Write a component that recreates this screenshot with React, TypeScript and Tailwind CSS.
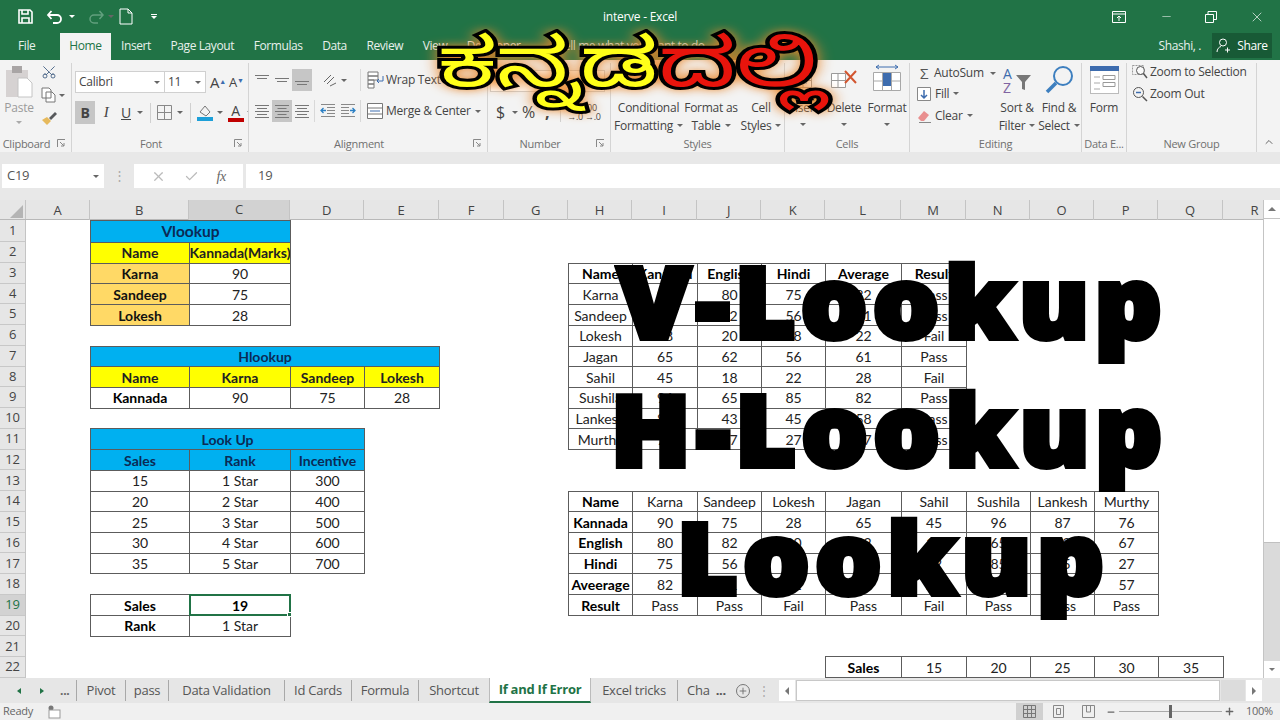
import React from 'react';
import { Scissors, ChevronUp, Plus, Minus, X, Check } from 'lucide-react';

type Cell = { c: number; t?: string; span?: number; kind?: string };

const cellStyles: Record<string, string> = {
  plain: 'bg-white text-[#222]',
  bold: 'bg-white font-bold text-black',
  blue: 'bg-[#00b0f0] font-bold text-[#0b2a55]',
  title: 'bg-[#00b0f0] text-[15.5px] font-bold text-[#0b2a55]',
  yellow: 'bg-[#ffff00] font-bold text-[#222]',
  orange: 'bg-[#ffd966] font-bold text-[#111]',
};

const letters = ['A', 'B', 'C', 'D', 'E', 'F', 'G', 'H', 'I', 'J', 'K', 'L', 'M', 'N', 'O', 'P', 'Q', 'R'];
const colTemplate = 'grid-cols-[64px_99px_101px_74px_75px_65px_64px_64px_65px_64px_64px_76px_65px_64px_64px_64px_65px_64px]';

const line = (c: number, values: string[], firstKind = 'plain', restKind = 'plain'): Cell[] =>
  values.map((t, i) => ({ c: c + i, t, kind: i === 0 ? firstKind : restKind }));

const vRows: string[][] = [
  ['Karna', '90', '80', '75', '82', 'Pass'],
  ['Sandeep', '75', '82', '56', '71', 'Pass'],
  ['Lokesh', '28', '20', '18', '22', 'Fail'],
  ['Jagan', '65', '62', '56', '61', 'Pass'],
  ['Sahil', '45', '18', '22', '28', 'Fail'],
  ['Sushila', '96', '65', '85', '82', 'Pass'],
  ['Lankesh', '87', '43', '45', '58', 'Pass'],
  ['Murthy', '76', '67', '27', '57', 'Pass'],
];

const sheetRows: Cell[][] = [
  [{ c: 1, t: 'Vlookup', span: 2, kind: 'title' }],
  line(1, ['Name', 'Kannada(Marks)'], 'yellow', 'yellow'),
  [...line(1, ['Karna', '90'], 'orange'), ...line(7, ['Name', 'Kannada', 'English', 'Hindi', 'Average', 'Result'], 'bold', 'bold')],
  [...line(1, ['Sandeep', '75'], 'orange'), ...line(7, vRows[0])],
  [...line(1, ['Lokesh', '28'], 'orange'), ...line(7, vRows[1])],
  line(7, vRows[2]),
  [{ c: 1, t: 'Hlookup', span: 4, kind: 'blue' }, ...line(7, vRows[3])],
  [...line(1, ['Name', 'Karna', 'Sandeep', 'Lokesh'], 'yellow', 'yellow'), ...line(7, vRows[4])],
  [...line(1, ['Kannada', '90', '75', '28'], 'bold'), ...line(7, vRows[5])],
  line(7, vRows[6]),
  [{ c: 1, t: 'Look Up', span: 3, kind: 'blue' }, ...line(7, vRows[7])],
  line(1, ['Sales', 'Rank', 'Incentive'], 'blue', 'blue'),
  line(1, ['15', '1 Star', '300']),
  [...line(1, ['20', '2 Star', '400']), ...line(7, ['Name', 'Karna', 'Sandeep', 'Lokesh', 'Jagan', 'Sahil', 'Sushila', 'Lankesh', 'Murthy'], 'bold')],
  [...line(1, ['25', '3 Star', '500']), ...line(7, ['Kannada', '90', '75', '28', '65', '45', '96', '87', '76'], 'bold')],
  [...line(1, ['30', '4 Star', '600']), ...line(7, ['English', '80', '82', '20', '62', '18', '65', '43', '67'], 'bold')],
  [...line(1, ['35', '5 Star', '700']), ...line(7, ['Hindi', '75', '56', '18', '56', '22', '85', '45', '27'], 'bold')],
  line(7, ['Aveerage', '82', '71', '22', '61', '28', '82', '58', '57'], 'bold'),
  [{ c: 1, t: 'Sales', kind: 'bold' }, { c: 2, t: '19', kind: 'selected' }, ...line(7, ['Result', 'Pass', 'Pass', 'Fail', 'Pass', 'Fail', 'Pass', 'Pass', 'Pass'], 'bold')],
  [{ c: 1, t: 'Rank', kind: 'bold' }, { c: 2, t: '1 Star' }],
  [],
  [{ c: 11, t: 'Sales', kind: 'bold' }, ...line(12, ['15', '20', '25', '30', '35'])],
];

const SheetRow = ({ cells }: { cells: Cell[] }) => {
  const out: React.ReactNode[] = [];
  let col = 0;
  cells.forEach((cell) => {
    while (col < cell.c) out.push(<div key={col++} />);
    const selected = cell.kind === 'selected';
    out.push(
      <div
        key={col}
        className={`-mb-px -mr-px flex items-center justify-center whitespace-nowrap ${
          selected ? 'relative z-10 border-2 border-[#217346] bg-white font-bold text-black' : `overflow-hidden border border-[#5c5c5c] ${cellStyles[cell.kind ?? 'plain']}`
        } ${cell.span === 2 ? 'col-span-2' : cell.span === 3 ? 'col-span-3' : cell.span === 4 ? 'col-span-4' : ''}`}
      >
        {cell.t}
        {selected && <span className="absolute -bottom-[3px] -right-[3px] h-[5px] w-[5px] border border-white bg-[#217346]" />}
      </div>,
    );
    col += cell.span ?? 1;
  });
  while (col < 18) out.push(<div key={col++} />);
  return <>{out}</>;
};

const Caret = ({ className = '' }: { className?: string }) => (
  <span className={`inline-block h-0 w-0 shrink-0 border-x-[3px] border-t-[3px] border-x-transparent border-t-[#666] ${className}`} />
);

const Launcher = () => (
  <svg width="9" height="9" viewBox="0 0 9 9" fill="none" stroke="#888" className="shrink-0">
    <path d="M.5 8V.5H8M3 3l4 4M7 4v3H4" />
  </svg>
);

const Group = ({ w, label, launcher, children }: { w: string; label: string; launcher?: boolean; children: React.ReactNode }) => (
  <div className={`flex h-full shrink-0 flex-col border-r border-[#d4d4d4] ${w}`}>
    <div className="flex min-h-0 flex-1 overflow-hidden">{children}</div>
    <div className="flex h-[18px] items-center justify-center gap-1 text-[11px] text-[#707070]">
      <span className="flex-1 text-center">{label}</span>
      {launcher && <span className="pr-[5px]"><Launcher /></span>}
    </div>
  </div>
);

const AlignIcon = ({ rows, active, widths }: { rows: number[]; active?: boolean; widths?: number[] }) => (
  <span className={`flex h-[22px] w-[20px] shrink-0 items-center justify-center ${active ? 'bg-[#c6c6c6]' : ''}`}>
    <svg width="16" height="16" viewBox="0 0 16 16" stroke="#777" strokeWidth="1">
      {rows.map((y, i) => {
        const w = widths ? widths[i % widths.length] : 14;
        return <line key={y} x1={(16 - w) / 2} x2={(16 + w) / 2} y1={y + 0.5} y2={y + 0.5} />;
      })}
    </svg>
  </span>
);

const IndentIcon = ({ flip }: { flip?: boolean }) => (
  <span className="flex h-[22px] w-[20px] shrink-0 items-center justify-center">
    <svg width="16" height="16" viewBox="0 0 16 16" fill="none" className={flip ? '-scale-x-100' : ''}>
      <path d="M1 1.500h14M7 4.500h8M7 7.500h8M7 10.500h8M1 13.500h14" stroke="#888" />
      <path d="M6 7.500H1M3.500 5 1 7.500 3.500 10" stroke="#2a7fc4" strokeWidth="1.300" />
    </svg>
  </span>
);

const BigCell = ({ label, icon, w }: { label: string; icon: React.ReactNode; w: string }) => (
  <div className={`flex flex-col items-center ${w}`}>
    <div className="flex h-[34px] shrink-0 items-center">{icon}</div>
    <div className="mt-[2px] shrink-0 leading-[18px]">{label}</div>
    <Caret className="mt-[6px]" />
  </div>
);

const TwoLine = ({ a, b, w, icon, caret = true }: { a: string; b: string; w: string; icon?: React.ReactNode; caret?: boolean }) => (
  <div className={`flex shrink-0 flex-col items-center ${w}`}>
    <div className="flex h-[34px] shrink-0 items-center">{icon}</div>
    <div className="mt-[2px] shrink-0 whitespace-nowrap leading-[18px]">{a}</div>
    <div className="flex shrink-0 items-center gap-1 whitespace-nowrap leading-[17px]">
      {b}
      {caret && <Caret />}
    </div>
  </div>
);

const cellGrid = (hi: string) => (
  <svg width="30" height="30" viewBox="0 0 30 30" fill="#fff" stroke="#9a9a9a">
    <path d="M6.500 8.500h17v7h-17zM6.500 15.500h17v7h-17zM15 8.500v14" />
    <rect x="11" y="12" width="8" height="7" fill={hi} stroke="none" />
  </svg>
);

const SheetTab = ({ t, w, sep = true }: { t: string; w: string; sep?: boolean }) => (
  <div className={`flex h-[21px] shrink-0 items-center justify-center whitespace-nowrap text-[13px] text-[#555] ${w} ${sep ? 'border-r border-[#a8a8a8]' : ''}`}>{t}</div>
);

export default function App() {
  const ribbonTabs = ['Insert', 'Page Layout', 'Formulas', 'Data', 'Review', 'View', 'Developer'];
  return (
    <div className="relative flex h-[720px] w-[1280px] flex-col overflow-hidden bg-[#e8e8e8] font-['Open_Sans',sans-serif] text-[12px] tracking-[-0.25px] text-[#444]">
      {/* title bar */}
      <div className="flex h-[33px] items-center bg-[#217346] text-white">
        <div className="flex w-[520px] items-center pl-[18px]">
          <svg width="15" height="15" viewBox="0 0 15 15" fill="none" stroke="#fff" strokeWidth="1.600"><path d="M1 1h11l2 2v11H1zM4 1v4h6V1M4 14V9h7v5" /></svg>
          <svg width="18" height="16" viewBox="0 0 18 16" fill="none" stroke="#fff" strokeWidth="1.800" className="ml-[13px]"><path d="M2 6h9a4 4 0 0 1 0 8H7M5.500 2 2 6l3.500 4" /></svg>
          <Caret className="ml-[5px] border-t-white" />
          <svg width="18" height="16" viewBox="0 0 18 16" fill="none" stroke="#62a07e" strokeWidth="1.500" className="ml-[12px]"><path d="M16 6H7a4 4 0 0 0 0 8h4M12.500 2 16 6l-3.500 4" /></svg>
          <Caret className="ml-[3px] border-t-[#62a07e]" />
          <svg width="14" height="17" viewBox="0 0 14 17" fill="none" stroke="#fff" className="ml-[5px]"><path d="M1 1h8l4 4v11H1zM9 1v4h4" /></svg>
          <span className="ml-[18px] flex flex-col items-center gap-[1px]"><span className="h-px w-[6px] bg-white" /><Caret className="border-t-white" /></span>
        </div>
        <div className="w-[240px] text-center text-[12px]">interve - Excel</div>
        <div className="ml-auto flex items-center pr-[15px]">
          <svg width="14" height="12" viewBox="0 0 14 12" fill="none" stroke="#fff"><path d="M.5.500h13v11H.5zM.5 3h13M7 10V5M5 7l2-2 2 2" /></svg>
          <Minus size={13} strokeWidth={1} className="ml-[34px]" />
          <svg width="12" height="12" viewBox="0 0 12 12" fill="none" stroke="#fff" className="ml-[32px]"><path d="M.5 3.500h8v8h-8zM3 3.500v-3h8.500v8H8.500" /></svg>
          <X size={16} strokeWidth={1} className="ml-[32px]" />
        </div>
      </div>

      {/* tab row */}
      <div className="flex h-[27px] items-end bg-[#217346] text-[12px] tracking-[-0.4px] text-[#e8f1ec]">
        <div className="flex h-[27px] w-[60px] items-center pb-[2px] pl-[18px]">File</div>
        <div className="flex h-[27px] w-[51px] items-center justify-center bg-[#f3f3f3] pb-[1px] text-[#217346]">Home</div>
        <div className="flex h-[27px] items-center gap-[19.500px] pb-[2px] pl-[10px]">
          {ribbonTabs.map((t) => <span key={t}>{t}</span>)}
        </div>
        <div className="flex h-[27px] items-center pb-[2px] pl-[37px] text-[#cfe0d6]">Tell me what you want to do</div>
        <div className="ml-auto flex h-[27px] items-center pb-[2px]">
          <span className="mr-[11px]">Shashi, .</span>
          <div className="mr-[8px] flex h-[25px] w-[60px] items-center justify-center gap-[6px] bg-[#185a36] text-[12px] text-white">
            <svg width="15" height="15" viewBox="0 0 15 15" fill="none" stroke="#fff"><circle cx="7" cy="4.500" r="3.500" /><path d="M1 14c0-3 2-5 4-5.500M9 12h5M11.500 9.500v5" /></svg>
            Share
          </div>
        </div>
      </div>

      {/* ribbon */}
      <div className="flex h-[92px] items-stretch bg-[#f3f3f3] pt-[3px] leading-none">
        <Group w="w-[72px]" label="Clipboard" launcher>
          <div className="flex w-[38px] shrink-0 flex-col items-center pt-[2px] text-[#9b9b9b]">
            <svg width="30" height="33" viewBox="0 0 30 33" className="shrink-0"><rect x="2" y="5" width="22" height="27" fill="#d6d2d2" /><rect x="8" y="1" width="10" height="7" fill="#a9a5a5" /><path d="M14 13h9l5 5v14H14z" fill="#fff" stroke="#c4c4c4" /></svg>
            <div className="mt-[4px]">Paste</div>
            <Caret className="mt-[7px] border-t-[#aaa]" />
          </div>
          <div className="flex w-[30px] shrink-0 flex-col items-start gap-[7px] pl-[3px] pt-[1px]">
            <Scissors size={16} strokeWidth={1.300} color="#3e5a80" className="-rotate-90" />
            <span className="flex items-center gap-[3px]">
              <svg width="15" height="16" viewBox="0 0 15 16" fill="#fff" stroke="#777"><path d="M1 1h7l2 2v8H1zM5 5h6l3 3v7H5z" /></svg>
              <Caret />
            </span>
            <svg width="17" height="16" viewBox="0 0 17 16"><path d="M1 10l5-3 4 4-4 4z" fill="#e6b95c" /><path d="M8 8l6-6 2 2-6 6z" fill="#57595c" /></svg>
          </div>
        </Group>

        <Group w="w-[177px]" label="Font" launcher>
          <div className="flex flex-col pl-[3px] pt-[8px]">
            <div className="flex h-[22px] items-center">
              <div className="flex h-[22px] w-[90px] items-center justify-between border border-[#d0d0d0] bg-white px-[3px] text-[12px]">Calibri<Caret className="mr-[1px]" /></div>
              <div className="flex h-[22px] w-[41px] items-center justify-between border border-l-0 border-[#d0d0d0] bg-white px-[3px] text-[12px]">11<Caret className="mr-[1px]" /></div>
              <span className="ml-[4px] text-[15px]">A<sup className="text-[7px] text-[#3d6cae]">▲</sup></span>
              <span className="ml-[3px] text-[13px]">A<sup className="text-[7px] text-[#3d6cae]">▼</sup></span>
            </div>
            <div className="mt-[8px] flex h-[23px] items-center">
              <span className="flex h-[23px] w-[20px] items-center justify-center bg-[#c6c6c6] text-[14px] font-bold">B</span>
              <span className="ml-[1px] flex w-[20px] justify-center font-['Liberation_Serif',serif] text-[15px] italic">I</span>
              <span className="flex w-[20px] justify-center text-[14px] underline">U</span>
              <Caret className="ml-[1px]" />
              <span className="ml-[7px] h-[20px] w-px bg-[#d0d0d0]" />
              <svg width="15" height="15" viewBox="0 0 15 15" fill="none" stroke="#888" className="ml-[6px]"><path d="M.5.500h14v14H.5zM7.500 0v15M0 7.500h15" /></svg>
              <Caret className="ml-[5px]" />
              <span className="ml-[7px] h-[20px] w-px bg-[#d0d0d0]" />
              <svg width="18" height="19" viewBox="0 0 18 19" className="ml-[5px]"><path d="M4 9l5-6 5 6-4 4z" fill="none" stroke="#777" /><rect x="1" y="14" width="16" height="4" fill="#1d9fd8" /></svg>
              <Caret className="ml-[3px]" />
              <span className="ml-[4px] flex w-[17px] flex-col items-center text-[14px] leading-[14px]">A<span className="h-[4px] w-[16px] bg-[#c00000]" /></span>
              <Caret className="ml-[3px]" />
            </div>
          </div>
        </Group>

        <Group w="w-[239px]" label="Alignment" launcher>
          <div className="flex flex-col pl-[3px] pt-[6px]">
            <div className="flex h-[22px] items-center">
              <AlignIcon rows={[3, 6]} widths={[14, 10]} />
              <AlignIcon rows={[6, 9]} widths={[14, 10]} />
              <AlignIcon rows={[9, 12]} widths={[14, 10]} active />
              <svg width="16" height="16" viewBox="0 0 16 16" fill="none" stroke="#666" className="ml-[10px] shrink-0"><path d="M2 10 9 3M5 12l7-7M8 14l6-3" /></svg>
              <Caret className="ml-[3px]" />
              <span className="ml-[13px] h-[22px] w-px shrink-0 bg-[#d8d8d8]" />
              <svg width="18" height="18" viewBox="0 0 18 18" fill="#fff" stroke="#777" className="ml-[6px] shrink-0"><path d="M1 1h10v4H1zM1 5h10v4H1zM1 9h6v4H1zM1 13h6v4H1z" /><path d="M16 5v5h-6M12 8l-2 2 2 2" fill="none" stroke="#3d6cae" /></svg>
              <span className="ml-[1px] whitespace-nowrap">Wrap Text</span>
            </div>
            <div className="mt-[9px] flex h-[22px] items-center">
              <AlignIcon rows={[2, 5, 8, 11, 14]} widths={[14, 10]} />
              <AlignIcon rows={[2, 5, 8, 11, 14]} widths={[14, 9]} active />
              <AlignIcon rows={[2, 5, 8, 11, 14]} widths={[14, 10]} />
              <span className="ml-[2px] mr-[3px] h-[22px] w-px shrink-0 bg-[#d8d8d8]" />
              <IndentIcon />
              <IndentIcon flip />
              <span className="ml-[2px] h-[22px] w-px shrink-0 bg-[#d8d8d8]" />
              <svg width="16" height="16" viewBox="0 0 16 16" fill="#fff" stroke="#777" className="ml-[6px] shrink-0"><path d="M.5.500h15v15H.5zM.5 5h15M.5 11h15" /><path d="M3 8h10" stroke="#3d6cae" /></svg>
              <span className="ml-[3px] whitespace-nowrap">Merge &amp; Center</span>
              <Caret className="ml-[4px]" />
            </div>
          </div>
        </Group>

        <Group w="w-[123px]" label="Number" launcher>
          <div className="flex flex-col pl-[2px] pt-[7px]">
            <div className="h-[22px] w-[115px] border border-[#d0d0d0] bg-white" />
            <div className="mt-[8px] flex h-[24px] items-center">
              <span className="ml-[6px] text-[16px]">$</span>
              <Caret className="ml-[7px]" />
              <span className="ml-[4px] text-[16px]">%</span>
              <span className="ml-[10px] text-[16px] font-bold">,</span>
              <span className="ml-[11px] h-[20px] w-px shrink-0 bg-[#d0d0d0]" />
              <span className="ml-[6px] text-[9px] leading-[9px]">.00<br />→.0</span>
              <span className="ml-[2px] text-[9px] leading-[9px]">.00<br />→.0</span>
            </div>
          </div>
        </Group>

        <Group w="w-[174px]" label="Styles">
          <TwoLine a="Conditional" b="Formatting" w="w-[72px] pl-[3px]" />
          <TwoLine a="Format as" b="Table" w="w-[56px]" />
          <TwoLine a="Cell" b="Styles" w="w-[44px]" />
        </Group>

        <Group w="w-[125px]" label="Cells">
          <BigCell label="Insert" w="w-[36px]" icon={cellGrid('#9dc3e6')} />
          <BigCell label="Delete" w="w-[46px]" icon={<svg width="30" height="30" viewBox="0 0 30 30" fill="#fff" stroke="#9a9a9a"><path d="M2.500 8.500h14v7h-14zM2.500 15.500h14v7h-14zM9 8.500v14" /><path d="M16 6l11 12M27 6 16 18" stroke="#d2552f" strokeWidth="2" /></svg>} />
          <BigCell label="Format" w="w-[40px]" icon={<svg width="30" height="32" viewBox="0 0 30 32" fill="#fff" stroke="#a8a8a8"><path d="M1.500 8.500h27v18h-27zM10.500 8.500v18M19.500 8.500v18M1.500 17h27" /><rect x="11" y="9" width="8" height="13" fill="#3d6cae" stroke="none" /><path d="M4 3h22M4 3l3-2M4 3l3 2M26 3l-3-2M26 3l-3 2" stroke="#3d6cae" fill="none" /></svg>} />
        </Group>

        <Group w="w-[172px]" label="Editing">
          <div className="flex w-[88px] shrink-0 flex-col gap-[9px] pl-[7px] pt-[2px]">
            <div className="flex h-[16px] items-center gap-[3px] whitespace-nowrap -mb-[3px]"><span className="w-[14px] text-center text-[15px] leading-[16px] text-[#555]">Σ</span>AutoSum<Caret className="ml-[3px]" /></div>
            <div className="flex h-[13px] items-center gap-[4px]"><svg width="14" height="15" viewBox="0 0 14 15" fill="#fff" stroke="#888"><path d="M.5 1.500h13v13H.5z" /><path d="M7 4v8M4 9l3 3 3-3" stroke="#3d6cae" strokeWidth="1.500" fill="none" /></svg>Fill<Caret /></div>
            <div className="flex h-[13px] items-center gap-[4px]"><svg width="14" height="14" viewBox="0 0 14 14"><path d="M1 9l6-7 5 4-5 6H4z" fill="#e98f8f" /><path d="M2 13.500h12" stroke="#888" /></svg>Clear<Caret /></div>
          </div>
          <TwoLine a="Sort &" b="Filter" w="w-[38px]" icon={<svg width="30" height="30" viewBox="0 0 30 30" className="overflow-visible"><text x="1" y="14" fontSize="14" fill="#3d6cae">A</text><text x="1" y="28" fontSize="14" fill="#8064a2">Z</text><path d="M14 10h15l-6 7v8l-3-1v-7z" fill="#777" /></svg>} />
          <TwoLine a="Find &" b="Select" w="w-[38px] ml-[4px]" icon={<svg width="30" height="30" viewBox="0 0 30 30" fill="none"><circle cx="19" cy="11" r="9" stroke="#3d7fbf" strokeWidth="2" /><path d="M12 18 3 27" stroke="#3d7fbf" strokeWidth="3.500" /></svg>} />
        </Group>

        <Group w="w-[45px]" label="Data E...">
          <div className="flex w-full flex-col items-center">
            <svg width="29" height="29" viewBox="0 0 29 29" className="mt-[3px] shrink-0"><rect x=".5" y=".5" width="28" height="27" fill="#fff" stroke="#bbb" /><rect width="29" height="5" fill="#3d6cae" /><path d="M4 11h6M4 17h6M4 23h6" stroke="#aaa" /><path d="M13 9.500h12v4H13zM13 16.500h12v4H13z" fill="none" stroke="#999" /></svg>
            <div className="mt-[7px]">Form</div>
          </div>
        </Group>

        <Group w="w-[130px]" label="New Group">
          <div className="flex flex-col gap-[9px] pl-[5px] pt-[2px]">
            <div className="flex h-[13px] items-center gap-[2px] whitespace-nowrap">
              <svg width="16" height="16" viewBox="0 0 16 16" fill="none"><path d="M.5 1.500h11v9H.5z" stroke="#999" strokeDasharray="2 1" /><circle cx="8.500" cy="6.500" r="4" stroke="#555" fill="#fff" fillOpacity=".6" /><path d="M11.500 9.500 15 14" stroke="#555" strokeWidth="1.500" /></svg>
              Zoom to Selection
            </div>
            <div className="flex h-[13px] items-center gap-[2px] whitespace-nowrap">
              <svg width="16" height="16" viewBox="0 0 16 16" fill="none"><circle cx="6.500" cy="6.500" r="5" stroke="#555" /><path d="M4 6.500h5" stroke="#3d6cae" strokeWidth="1.500" /><path d="M10.500 10.500 15 15" stroke="#555" strokeWidth="1.500" /></svg>
              Zoom Out
            </div>
          </div>
        </Group>
        <div className="flex flex-1 items-end justify-center pb-[4px]"><ChevronUp size={12} strokeWidth={2} color="#666" /></div>
      </div>

      {/* formula bar */}
      <div className="mt-[12px] flex h-[24px] items-stretch gap-[3px] text-[13px] text-[#555]">
        <div className="ml-[2px] flex w-[102px] items-center justify-between bg-white px-[5px]">C19<Caret /></div>
        <div className="flex w-[24px] items-center justify-center text-[#aaa]">⋮</div>
        <div className="flex w-[109px] items-center justify-around bg-white px-[8px] text-[#bbb]">
          <X size={15} /><Check size={15} /><span className="font-['Liberation_Serif',serif] text-[14px] italic text-[#666]">fx</span>
        </div>
        <div className="flex flex-1 items-center bg-white pl-[12px]">19</div>
      </div>

      {/* sheet */}
      <div className="mt-[12px] flex h-[478px] bg-white">
        <div className="flex w-[1263px] flex-col overflow-hidden">
          <div className="flex h-[20px] shrink-0 border-b border-[#b8b8b8] bg-[#e6e6e6] text-[13px] text-[#444]">
            <div className="flex w-[26px] shrink-0 items-end justify-end border-r border-[#c4c4c4] pb-[1px] pr-[2px]"><span className="h-0 w-0 border-b-[13px] border-l-[13px] border-b-[#b4b4b4] border-l-transparent" /></div>
            <div className={`grid w-[1261px] shrink-0 ${colTemplate}`}>
              {letters.map((l) => (
                <div key={l} className={`flex items-center justify-center border-r border-[#c4c4c4] ${l === 'C' ? 'border-b border-b-[#217346] bg-[#d2d2d2]' : ''}`}>{l}</div>
              ))}
            </div>
          </div>
          <div className="flex h-[458px] bg-[#e6e6e6]">
            <div className="grid h-[458px] w-[26px] shrink-0 grid-rows-[22px_repeat(21,minmax(0,1fr))] border-r border-[#c4c4c4] text-[13px] text-[#444]">
              {sheetRows.map((_, i) => (
                <div key={i} className={`flex items-center justify-center border-b border-[#c8c8c8] ${i === 18 ? 'bg-[#d2d2d2] text-[#217346]' : ''}`}>{i + 1}</div>
              ))}
            </div>
            <div className="h-[458px] w-[1261px] shrink-0 bg-white">
              <div className={`grid h-[457px] grid-rows-[22px_repeat(21,minmax(0,1fr))] font-['Lato',sans-serif] text-[14px] tracking-normal ${colTemplate}`}>
                {sheetRows.map((cells, i) => <SheetRow key={i} cells={cells} />)}
              </div>
            </div>
          </div>
        </div>
        <div className="flex w-[17px] flex-col border-l border-[#c4c4c4] bg-[#dadada]">
          <div className="flex h-[19px] shrink-0 items-center justify-center border-b border-[#c4c4c4] bg-white"><span className="h-0 w-0 border-x-[4px] border-b-[4px] border-x-transparent border-b-[#777]" /></div>
          <div className="h-[324px] shrink-0 border-b border-[#c0c0c0] bg-white" />
          <div className="flex-1" />
          <div className="flex h-[17px] shrink-0 items-center justify-center bg-white"><Caret className="border-t-[#777]" /></div>
        </div>
      </div>

      {/* sheet tabs */}
      <div className="flex h-[25px] items-center bg-[#e6e6e6]">
        <div className="flex h-[21px] w-[77px] shrink-0 items-center border-r border-[#a8a8a8] pl-[17px]">
          <span className="h-0 w-0 border-y-[3px] border-r-[4px] border-y-transparent border-r-[#217346]" />
          <span className="ml-[19px] h-0 w-0 border-y-[3px] border-l-[4px] border-y-transparent border-l-[#217346]" />
          <span className="ml-[16px] font-bold text-[#666]">...</span>
        </div>
        <SheetTab t="Pivot" w="w-[49px]" />
        <SheetTab t="pass" w="w-[43px]" />
        <SheetTab t="Data Validation" w="w-[116px]" />
        <SheetTab t="Id Cards" w="w-[67px]" />
        <SheetTab t="Formula" w="w-[67px]" />
        <SheetTab t="Shortcut" w="w-[70px]" sep={false} />
        <div className="flex h-[25px] w-[102px] shrink-0 items-center justify-center border-x border-b-2 border-x-[#bbb] border-b-[#217346] bg-white text-[13px] font-bold text-[#217346]">If and If Error</div>
        <SheetTab t="Excel tricks" w="w-[87px]" />
        <div className="flex h-[21px] shrink-0 items-center whitespace-nowrap pl-[9px] text-[13px] text-[#555]">Cha<span className="ml-[6px] font-bold">...</span></div>
        <span className="ml-[10px] flex h-[14px] w-[14px] shrink-0 items-center justify-center rounded-full border border-[#777]"><Plus size={10} color="#666" /></span>
        <span className="ml-[8px] text-[#aaa]">⋮</span>
        <div className="ml-auto mr-[18px] flex h-[21px] w-[483px] shrink-0 items-center gap-[1px]">
          <div className="flex h-full w-[16px] items-center justify-center bg-white"><span className="h-0 w-0 border-y-[4px] border-r-[4px] border-y-transparent border-r-[#777]" /></div>
          <div className="h-full w-[424px] border border-[#c8c8c8] bg-white" />
          <div className="h-full flex-1 bg-[#dcdcdc]" />
          <div className="flex h-full w-[16px] items-center justify-center bg-white"><span className="h-0 w-0 border-y-[4px] border-l-[4px] border-y-transparent border-l-[#777]" /></div>
        </div>
      </div>

      {/* status bar */}
      <div className="flex h-[17px] items-center bg-[#f0f0f0] text-[11px] text-[#666]">
        <span className="pl-[3px]">Ready</span>
        <svg width="13" height="14" viewBox="0 0 13 14" className="ml-[15px]"><circle cx="3" cy="3" r="2.500" fill="#777" /><rect x="1" y="5" width="11" height="8" fill="#fff" stroke="#999" /></svg>
        <div className="ml-auto flex h-full items-center pr-[2px]">
          <div className="flex h-full w-[27px] items-center justify-center bg-[#d0d0d0]"><svg width="13" height="13" viewBox="0 0 13 13" fill="none" stroke="#777"><path d="M.5.500h12v12H.5zM4.500 0v13M8.500 0v13M0 4.500h13M0 8.500h13" /></svg></div>
          <svg width="13" height="13" viewBox="0 0 13 13" fill="none" stroke="#888" className="ml-[9px]"><path d="M1.500.500h10v12h-10zM4.500 3.500h4v6h-4z" /></svg>
          <svg width="13" height="13" viewBox="0 0 13 13" fill="none" stroke="#888" className="ml-[17px]"><path d="M.5.500h12v12H.5zM4.500 0v7h4V0" /></svg>
          <Minus size={10} strokeWidth={3} color="#666" className="ml-[11px]" />
          <div className="relative ml-[3px] h-px w-[103px] bg-[#aaa]">
            <span className="absolute -top-[6px] left-[50px] h-[13px] w-[3px] bg-[#666]" />
          </div>
          <Plus size={11} strokeWidth={3} color="#666" className="ml-[2px]" />
          <span className="ml-[11px] w-[32px] text-[11px]">100%</span>
        </div>
      </div>

      {/* big thumbnail titles over the sheet */}
      <div className="pointer-events-none absolute left-[618px] top-[230px] z-20 origin-left scale-x-[1.06] font-['Noto_Sans',sans-serif] text-[98px] font-black leading-[140px] tracking-[5.500px] text-black [-webkit-text-stroke:6px_#000]">V-Lookup</div>
      <div className="pointer-events-none absolute left-[611px] top-[358px] z-20 origin-left scale-x-[1.06] font-['Noto_Sans',sans-serif] text-[98px] font-black leading-[140px] tracking-[5.500px] text-black [-webkit-text-stroke:6px_#000]">H-Lookup</div>
      <div className="pointer-events-none absolute left-[677px] top-[486px] z-20 origin-left scale-x-[1.06] font-['Noto_Sans',sans-serif] text-[98px] font-black leading-[140px] tracking-[5.500px] text-black [-webkit-text-stroke:6px_#000]">Lookup</div>
      <div className="pointer-events-none absolute left-[438px] top-[32px] z-20 origin-left scale-x-[1.5] whitespace-nowrap font-['Noto_Sans_Kannada','Noto_Sans',sans-serif] text-[68px] font-normal leading-[90px] tracking-normal [paint-order:stroke_fill] [-webkit-text-stroke:6px_#000] [filter:drop-shadow(0_0_5px_#e8862a)]">
        <span className="text-[#ffff19]">ಕನ್ನಡ</span>
        <span className="text-[#e8140c]">ದಲ್ಲಿ</span>
      </div>
    </div>
  );
}
